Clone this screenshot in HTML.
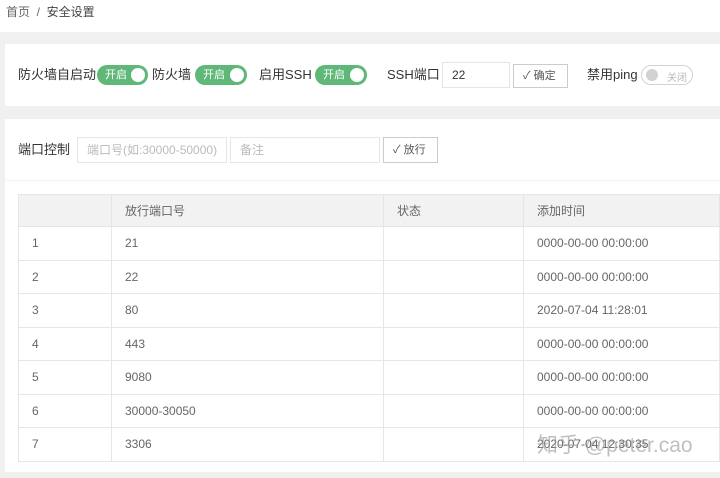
<!DOCTYPE html><html><head><meta charset="utf-8"><style>
body{margin:0;width:720px;height:478px;background:#f0f0f0;font-family:"Liberation Sans","Noto Sans CJK SC",sans-serif;color:#333;font-size:12px;overflow:hidden;position:relative}
.bc{position:absolute;left:0;top:0;width:720px;height:32px;background:#fff;color:#666;font-size:12px;line-height:24px;padding-left:6px;box-sizing:border-box}
.card{position:absolute;left:5px;width:715px;background:#fff}
.a{position:absolute;white-space:nowrap}
.sw{position:absolute;height:20px;border-radius:10px;background:#5fb878;color:#fff;font-size:11px;line-height:20px;box-sizing:border-box;padding-left:8px}
.sw:after{content:"";position:absolute;right:3px;top:3px;width:14px;height:14px;border-radius:50%;background:#fff}
.inp{position:absolute;height:26px;border:1px solid #e6e6e6;box-sizing:border-box;line-height:24px;padding-left:9px;color:#bbb}
.btn{position:absolute;height:24px;border:1px solid #ccc;box-sizing:border-box;line-height:22px;color:#555;font-size:11px;padding-left:9px}
table{position:absolute;left:13px;top:75px;border-collapse:collapse;width:702px}
td,th{border:1px solid #e6e6e6;height:33.5px;padding:0 0 0 13px;text-align:left;font-weight:normal;color:#666;font-size:12px;box-sizing:border-box}
th{background:#f2f2f2;height:32px}
</style></head><body>
<div class="bc">首页 &nbsp;/&nbsp; <span style="color:#444">安全设置</span></div>
<div class="card" style="top:44px;height:62px">
<span class="a" style="left:13px;top:22px;font-size:13px;line-height:17px">防火墙自启动</span>
<div class="sw" style="left:92px;top:21px;width:51px">开启</div>
<span class="a" style="left:147px;top:22px;font-size:13px;line-height:17px">防火墙</span>
<div class="sw" style="left:190px;top:21px;width:52px">开启</div>
<span class="a" style="left:254px;top:22px;font-size:13px;line-height:17px">启用SSH</span>
<div class="sw" style="left:310px;top:21px;width:52px">开启</div>
<span class="a" style="left:382px;top:22px;font-size:13px;line-height:17px">SSH端口</span>
<div class="inp" style="left:437px;top:18px;width:68px;color:#333">22</div>
<div class="btn" style="left:508px;top:20px;width:55px">✓ 确定</div>
<span class="a" style="left:582px;top:22px;font-size:13px;line-height:17px">禁用ping</span>
<div style="position:absolute;left:636px;top:21px;width:52px;height:20px;border:1px solid #d2d2d2;border-radius:10px;box-sizing:border-box;color:#bbb;font-size:10px;display:flex;align-items:center;padding-left:25px;padding-top:2px"><span>关闭</span><span style="position:absolute;left:4px;top:3px;width:12px;height:12px;border-radius:50%;background:#d2d2d2"></span></div>
</div>
<div class="card" style="top:119px;height:353px">
<span class="a" style="left:13px;top:22px;font-size:13px;line-height:17px">端口控制</span>
<div class="inp" style="left:72px;top:18px;width:150px">端口号(如:30000-50000)</div>
<div class="inp" style="left:225px;top:18px;width:150px">备注</div>
<div class="btn" style="left:378px;top:18px;width:55px;height:26px;line-height:24px">✓ 放行</div>
<div style="position:absolute;left:0;top:61px;width:715px;border-top:1px solid #f2f2f2"></div>
<table>
<tr><th style="width:93px"></th><th style="width:272px">放行端口号</th><th style="width:140px">状态</th><th>添加时间</th></tr>
<tr><td>1</td><td>21</td><td></td><td>0000-00-00 00:00:00</td></tr>
<tr><td>2</td><td>22</td><td></td><td>0000-00-00 00:00:00</td></tr>
<tr><td>3</td><td>80</td><td></td><td>2020-07-04 11:28:01</td></tr>
<tr><td>4</td><td>443</td><td></td><td>0000-00-00 00:00:00</td></tr>
<tr><td>5</td><td>9080</td><td></td><td>0000-00-00 00:00:00</td></tr>
<tr><td>6</td><td>30000-30050</td><td></td><td>0000-00-00 00:00:00</td></tr>
<tr><td>7</td><td>3306</td><td></td><td>2020-07-04 12:30:35</td></tr>
</table>
<span class="a" style="left:532px;top:310px;font-size:21px;color:rgba(150,150,150,.6)">知乎 @peter.cao</span>
</div>
</body></html>
